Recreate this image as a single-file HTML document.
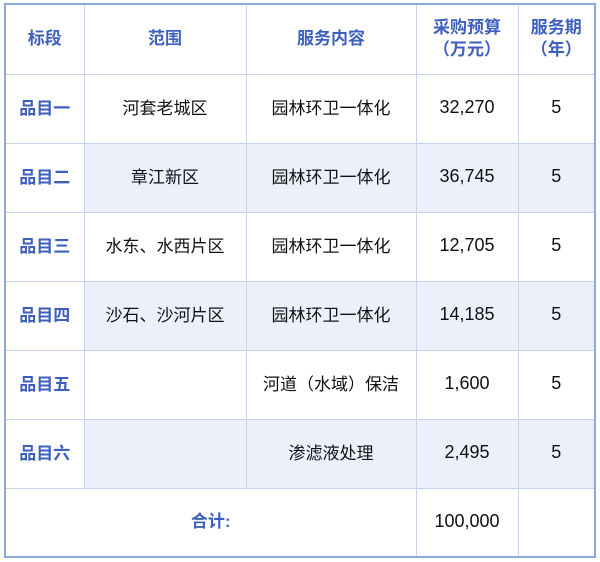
<!DOCTYPE html>
<html><head><meta charset="utf-8"><style>
body{margin:0;width:600px;height:562px;background:#fff;font-family:"Liberation Sans","Noto Sans CJK SC",sans-serif;}
table{position:absolute;left:4px;top:3px;border-collapse:collapse;border:2px solid #8eaadb;}
td{border:1px solid #c5d3ee;text-align:center;font-size:17px;line-height:22px;color:#111;padding:0;vertical-align:middle;}
td span{display:inline-block;vertical-align:middle;line-height:22px;font-size:18px;position:relative;top:-2px}
tr{height:69px}
tr.h{height:70px}
.b{color:#3d5fbf;font-weight:bold}
.s{background:#ecf0fa}
</style></head><body>
<table>
<colgroup><col style="width:79px"><col style="width:162px"><col style="width:170px"><col style="width:102px"><col style="width:77px"></colgroup>
<tr class="h"><td class="b">标段</td><td class="b">范围</td><td class="b">服务内容</td><td class="b">采购预算<br>（万元）</td><td class="b">服务期<br>（年）</td></tr>
<tr><td class="b">品目一</td><td>河套老城区</td><td>园林环卫一体化</td><td><span>32,270</span></td><td><span>5</span></td></tr>
<tr><td class="b">品目二</td><td class="s">章江新区</td><td class="s">园林环卫一体化</td><td class="s"><span>36,745</span></td><td class="s"><span>5</span></td></tr>
<tr><td class="b">品目三</td><td>水东、水西片区</td><td>园林环卫一体化</td><td><span>12,705</span></td><td><span>5</span></td></tr>
<tr><td class="b">品目四</td><td class="s">沙石、沙河片区</td><td class="s">园林环卫一体化</td><td class="s"><span>14,185</span></td><td class="s"><span>5</span></td></tr>
<tr><td class="b">品目五</td><td></td><td>河道（水域）保洁</td><td><span>1,600</span></td><td><span>5</span></td></tr>
<tr><td class="b">品目六</td><td class="s"></td><td class="s">渗滤液处理</td><td class="s"><span>2,495</span></td><td class="s"><span>5</span></td></tr>
<tr><td class="b" colspan="3">合计:</td><td><span>100,000</span></td><td></td></tr>
</table>
</body></html>
